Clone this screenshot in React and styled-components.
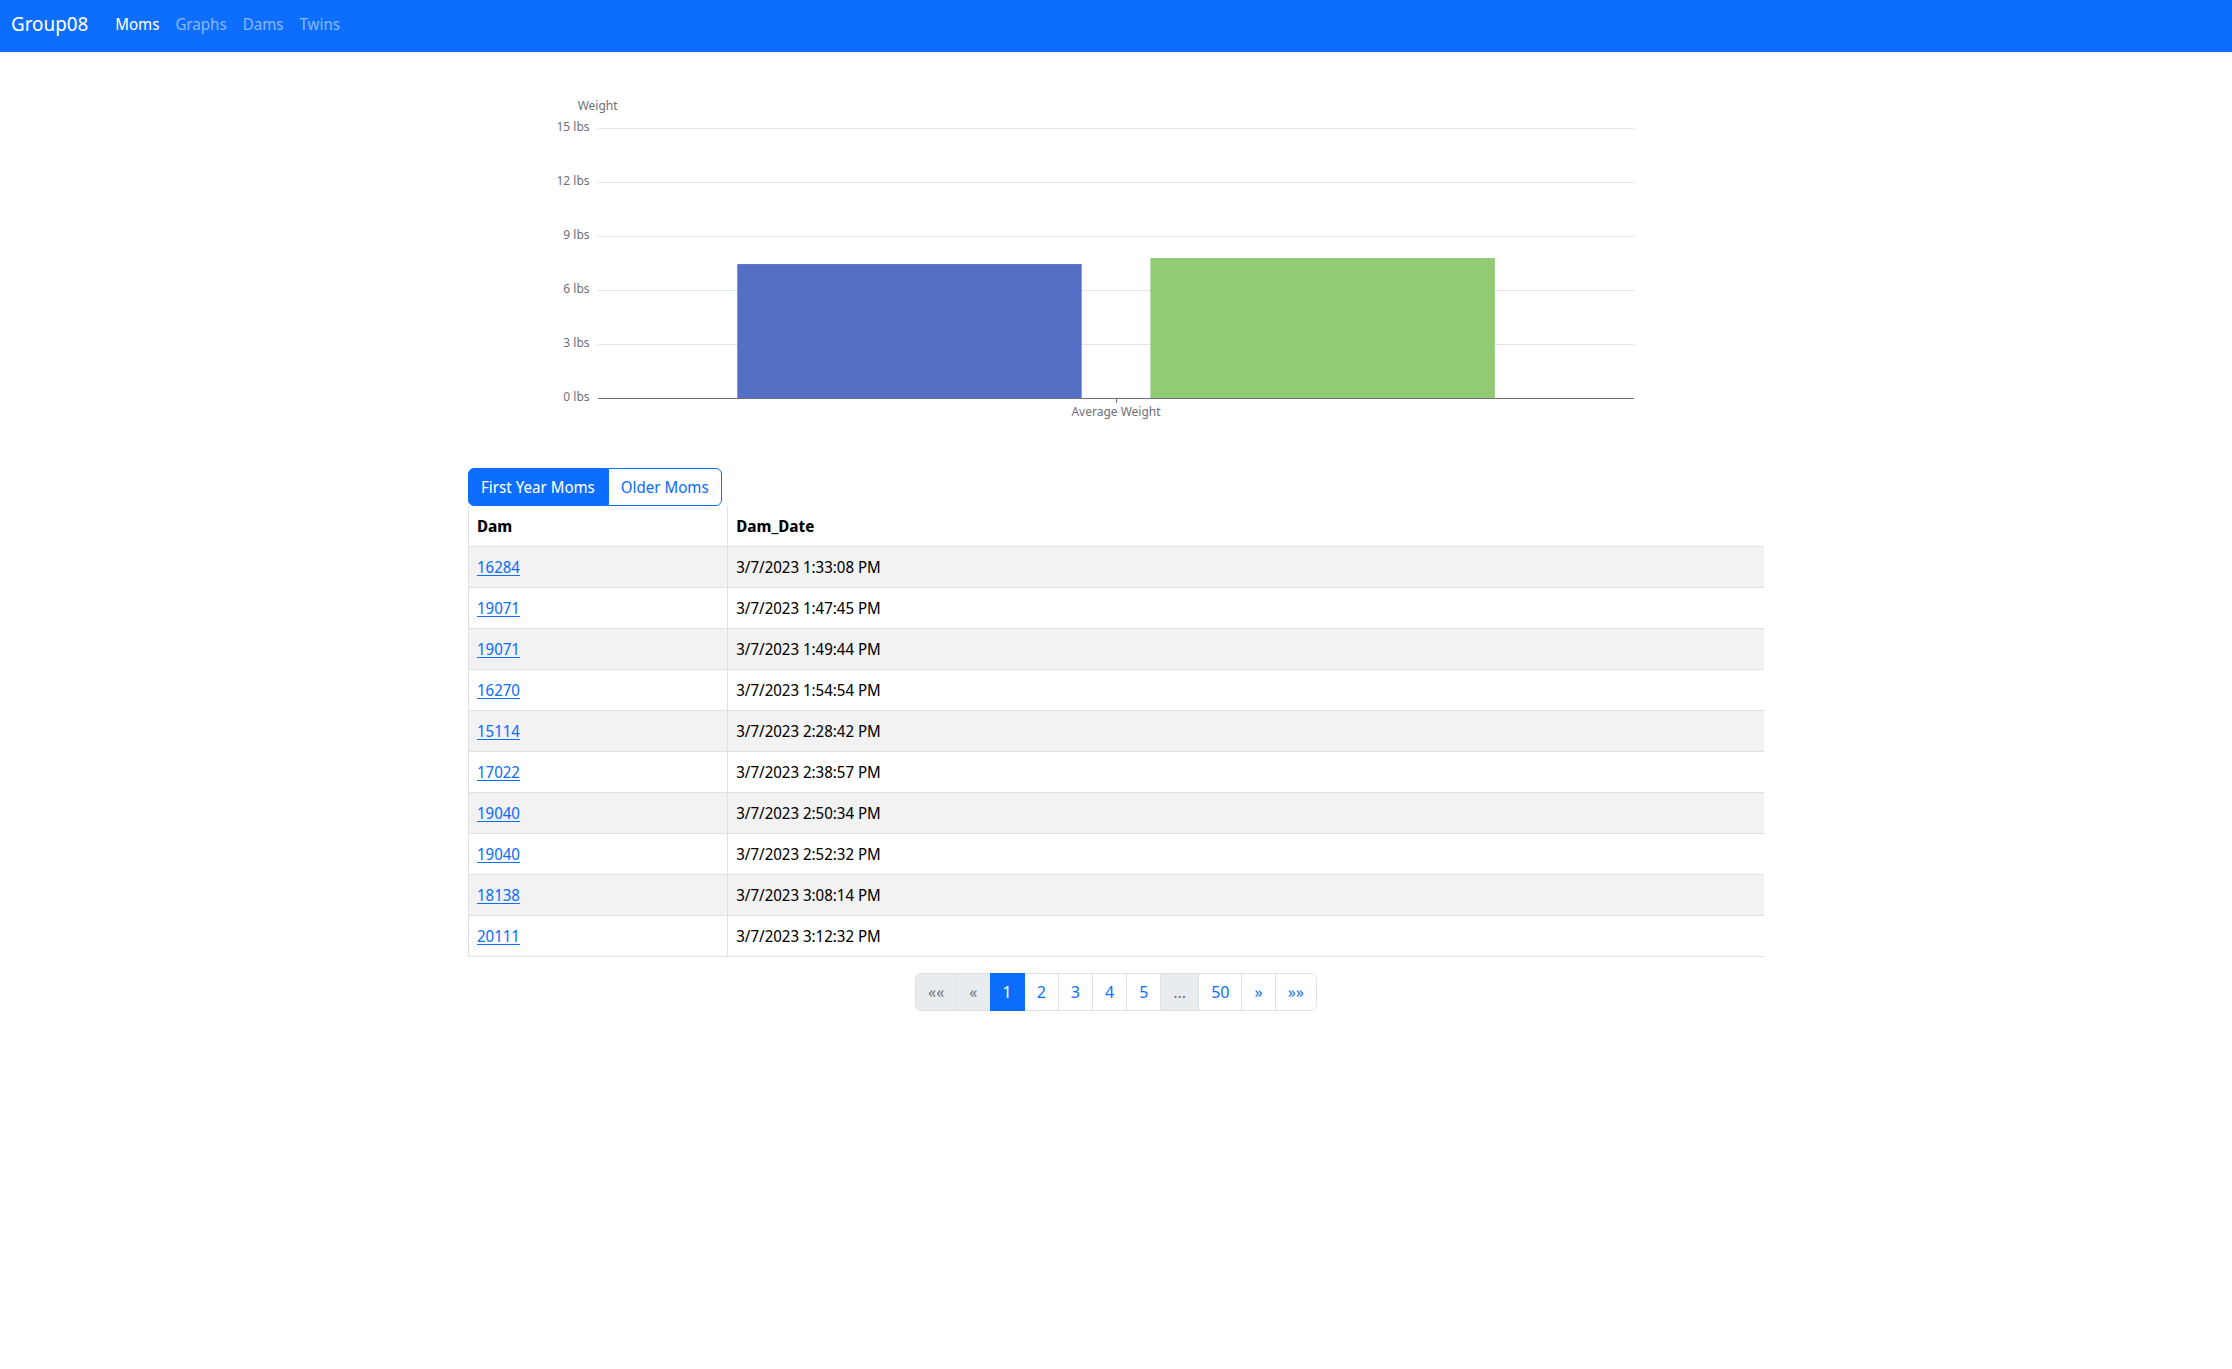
import React, { useState } from "react";
import styled, { createGlobalStyle } from "styled-components";

const BLUE = "#0d6efd";
const BORDER = "#dee2e6";

const GlobalStyle = createGlobalStyle`
  *, *::before, *::after { box-sizing: border-box; }
  body {
    margin: 0;
    background: #fff;
    color: #000;
    font-family: "Noto Sans Display", "Noto Sans", sans-serif;
    font-size: 16px;
    line-height: 24px;
  }
`;

const Navbar = styled.nav`
  display: flex;
  align-items: center;
  padding: 4px 11px 8px;
  background: ${BLUE};
`;

const Brand = styled.a`
  margin-right: 19px;
  padding: 5px 0;
  color: #fff;
  font-size: 20px;
  line-height: 30px;
  text-decoration: none;
`;

const NavList = styled.ul`
  display: flex;
  margin: 0;
  padding: 0;
  list-style: none;
`;

const NavLink = styled.a`
  display: block;
  padding: 8px;
  color: ${(p) => (p.$active ? "#fff" : "rgba(255, 255, 255, 0.5)")};
  text-decoration: none;
`;

const Container = styled.main`
  width: 100%;
  max-width: 1320px;
  margin: 0 auto;
  padding: 16px 12px;
`;

const Chart = styled.svg`
  display: block;
  width: 100%;
  height: 400px;
`;

const ChartText = styled.text`
  fill: #6e7079;
  font-family: "Noto Sans", sans-serif;
  font-size: 12px;
`;

const ButtonGroup = styled.div`
  display: flex;
`;

const ToggleButton = styled.button`
  margin: 0;
  padding: 6px 12px;
  border: 1px solid ${BLUE};
  background: ${(p) => (p.$active ? BLUE : "#fff")};
  color: ${(p) => (p.$active ? "#fff" : BLUE)};
  font: inherit;
  cursor: pointer;

  &:first-child { border-radius: 6px 0 0 6px; }
  &:last-child { border-radius: 0 6px 6px 0; }
`;

const Table = styled.table`
  width: 100%;
  margin-bottom: 16px;
  border-spacing: 0;
  table-layout: fixed;
`;

const HeadCell = styled.th`
  width: ${(p) => p.$width};
  padding: 8px;
  border-left: 1px solid ${BORDER};
  border-bottom: 1px solid ${BORDER};
  font-weight: 700;
  text-align: left;
`;

const Row = styled.tr`
  &:nth-child(odd) { background: #f2f2f2; }
`;

const Cell = styled.td`
  padding: 8px;
  border-left: 1px solid ${BORDER};
  border-bottom: 1px solid ${BORDER};
`;

const DamLink = styled.a`
  color: ${BLUE};
  text-decoration: underline;
  text-decoration-thickness: 1px;
  text-underline-offset: 2px;
`;

const Pagination = styled.ul`
  display: flex;
  justify-content: center;
  margin: 0;
  padding: 0;
  font-family: "Noto Sans", sans-serif;
  list-style: none;
`;

const PageItem = styled.li`
  & + & { margin-left: -1px; }
  &:first-child > * { border-radius: 6px 0 0 6px; }
  &:last-child > * { border-radius: 0 6px 6px 0; }
`;

const PageLink = styled.a`
  position: relative;
  z-index: ${(p) => (p.$active ? 1 : 0)};
  display: block;
  padding: 6px 12px;
  border: 1px solid ${(p) => (p.$active ? BLUE : BORDER)};
  background: ${(p) => (p.$active ? BLUE : p.$disabled ? "#e9ecef" : "#fff")};
  color: ${(p) => (p.$active ? "#fff" : p.$disabled ? "#6c757d" : BLUE)};
  text-decoration: none;
`;

const navItems = ["Moms", "Graphs", "Dams", "Twins"];

const rows = [
  ["16284", "3/7/2023 1:33:08 PM"],
  ["19071", "3/7/2023 1:47:45 PM"],
  ["19071", "3/7/2023 1:49:44 PM"],
  ["16270", "3/7/2023 1:54:54 PM"],
  ["15114", "3/7/2023 2:28:42 PM"],
  ["17022", "3/7/2023 2:38:57 PM"],
  ["19040", "3/7/2023 2:50:34 PM"],
  ["19040", "3/7/2023 2:52:32 PM"],
  ["18138", "3/7/2023 3:08:14 PM"],
  ["20111", "3/7/2023 3:12:32 PM"],
];

const pages = [
  { label: "««", disabled: true },
  { label: "«", disabled: true },
  { label: "1", active: true },
  { label: "2" },
  { label: "3" },
  { label: "4" },
  { label: "5" },
  { label: "...", disabled: true },
  { label: "50" },
  { label: "»" },
  { label: "»»" },
];

const PLOT_TOP = 60;
const PLOT_BOTTOM = 330;
const PX_PER_LB = (PLOT_BOTTOM - PLOT_TOP) / 15;
const ticks = [15, 12, 9, 6, 3, 0];
const bars = [
  { name: "First Year", value: 7.44, x: "13.47%", fill: "#5470c6" },
  { name: "Older", value: 7.78, x: "53.32%", fill: "#91cc75" },
];

function WeightChart() {
  return (
    <Chart role="img" aria-label="Average Weight">
      <ChartText x="10%" y="42" textAnchor="middle">Weight</ChartText>
      {ticks.map((t) => (
        <ChartText key={t} x="10%" dx="-8" y={PLOT_BOTTOM - t * PX_PER_LB + 3} textAnchor="end">
          {t} lbs
        </ChartText>
      ))}
      <svg x="10%" width="80%" height="400">
        {ticks.slice(0, -1).map((t) => {
          const y = PLOT_BOTTOM - t * PX_PER_LB + 0.5;
          return <line key={t} x1="0" x2="100%" y1={y} y2={y} stroke="#e0e6f1" />;
        })}
        {bars.map((b) => (
          <rect
            key={b.name}
            x={b.x}
            width="33.22%"
            y={PLOT_BOTTOM - b.value * PX_PER_LB}
            height={b.value * PX_PER_LB}
            fill={b.fill}
          />
        ))}
        <line x1="0" x2="100%" y1="330.5" y2="330.5" stroke="#6e7079" />
      </svg>
      <rect x="50%" y="331" width="1" height="4" fill="#6e7079" />
      <ChartText x="50%" y="348" textAnchor="middle">Average Weight</ChartText>
    </Chart>
  );
}

export default function App() {
  const [group, setGroup] = useState("First Year Moms");
  return (
    <>
      <GlobalStyle />
      <Navbar>
        <Brand href="#">Group08</Brand>
        <NavList>
          {navItems.map((item) => (
            <li key={item}>
              <NavLink href={`#${item.toLowerCase()}`} $active={item === "Moms"}>{item}</NavLink>
            </li>
          ))}
        </NavList>
      </Navbar>
      <Container>
        <WeightChart />
        <ButtonGroup role="group">
          {["First Year Moms", "Older Moms"].map((name) => (
            <ToggleButton
              key={name}
              type="button"
              $active={group === name}
              aria-pressed={group === name}
              onClick={() => setGroup(name)}
            >
              {name}
            </ToggleButton>
          ))}
        </ButtonGroup>
        <Table>
          <thead>
            <tr>
              <HeadCell scope="col" $width="20%">Dam</HeadCell>
              <HeadCell scope="col" $width="80%">Dam_Date</HeadCell>
            </tr>
          </thead>
          <tbody>
            {rows.map(([dam, date]) => (
              <Row key={date}>
                <Cell><DamLink href={`#dam-${dam}`}>{dam}</DamLink></Cell>
                <Cell>{date}</Cell>
              </Row>
            ))}
          </tbody>
        </Table>
        <nav>
          <Pagination>
            {pages.map((p) => (
              <PageItem key={p.label}>
                <PageLink
                  as={p.disabled ? "span" : "a"}
                  href={p.disabled ? undefined : "#"}
                  $active={p.active}
                  $disabled={p.disabled}
                >
                  {p.label}
                </PageLink>
              </PageItem>
            ))}
          </Pagination>
        </nav>
      </Container>
    </>
  );
}
